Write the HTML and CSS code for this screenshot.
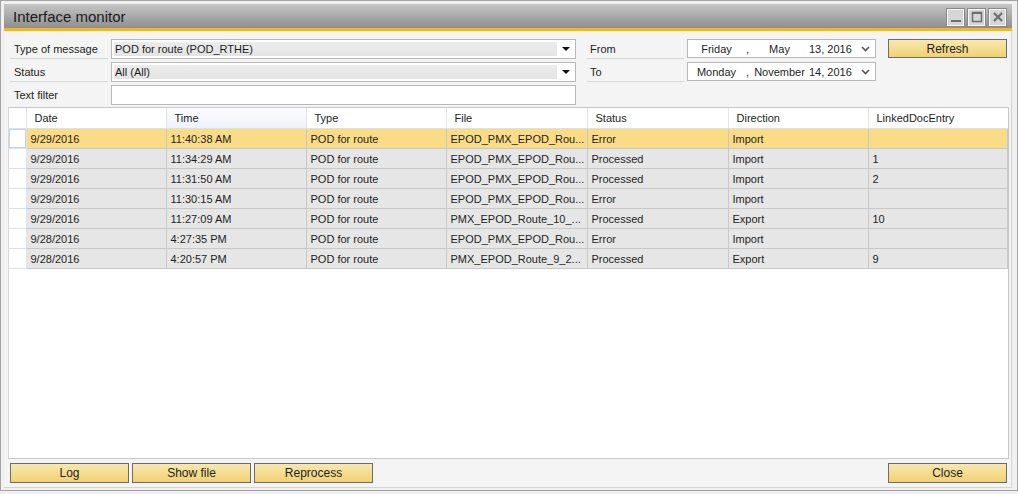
FILE: index.html
```html
<!DOCTYPE html>
<html lang="en">
<head>
  <meta charset="UTF-8">
  <title>Interface monitor</title>
  <link rel="stylesheet" href="styles.css">
</head>
<body>

  <div class="window">
    <!-- Title bar -->
    <div class="title-bar">
      <span class="title">Interface monitor</span>
      <div class="win-btns">
        <span class="win-btn"><svg width="14" height="14" viewBox="0 0 14 14"><rect x="2" y="10" width="10" height="2" fill="#6e6e6e"/></svg></span>
        <span class="win-btn"><svg width="14" height="14" viewBox="0 0 14 14"><rect x="2.5" y="2.5" width="9" height="9" fill="none" stroke="#6e6e6e" stroke-width="1.5"/><rect x="2" y="2" width="10" height="2" fill="#6e6e6e"/></svg></span>
        <span class="win-btn"><svg width="14" height="14" viewBox="0 0 14 14"><path d="M3 3 L11 11 M11 3 L3 11" stroke="#6e6e6e" stroke-width="2.2"/></svg></span>
      </div>
    </div>

    <div class="content">
      <!-- Filters -->
      <div class="filters">
        <div class="filter-left">
          <div class="row">
            <label class="lbl">Type of message</label>
            <div class="select"><div class="select-val">POD for route (POD_RTHE)</div><span class="arrow"></span></div>
          </div>
          <div class="row">
            <label class="lbl">Status</label>
            <div class="select"><div class="select-val">All (All)</div><span class="arrow"></span></div>
          </div>
          <div class="row">
            <label class="lbl no-line">Text filter</label>
            <div class="textbox"></div>
          </div>
        </div>

        <div class="filter-right">
          <div class="row">
            <label class="lbl">From</label>
            <div class="date">
              <span class="wd">Friday</span><span class="cm">,</span><span class="mo">May</span><span class="dy">13, 2016</span>
              <svg class="chev" width="9" height="6" viewBox="0 0 9 6"><path d="M1 1 L4.5 4.5 L8 1" fill="none" stroke="#555" stroke-width="1.6"/></svg>
            </div>
            <button class="btn refresh">Refresh</button>
          </div>
          <div class="row">
            <label class="lbl">To</label>
            <div class="date">
              <span class="wd">Monday</span><span class="cm">,</span><span class="mo">November</span><span class="dy">14, 2016</span>
              <svg class="chev" width="9" height="6" viewBox="0 0 9 6"><path d="M1 1 L4.5 4.5 L8 1" fill="none" stroke="#555" stroke-width="1.6"/></svg>
            </div>
          </div>
        </div>
      </div>

      <!-- Grid -->
      <div class="grid">
        <table>
          <colgroup>
            <col style="width:17px"><col style="width:140px"><col style="width:140px"><col style="width:140px">
            <col style="width:141px"><col style="width:141px"><col style="width:140px"><col>
          </colgroup>
          <thead>
            <tr>
              <th class="rh"></th><th>Date</th><th class="sorted">Time</th><th>Type</th><th>File</th><th>Status</th><th>Direction</th><th>LinkedDocEntry</th>
            </tr>
          </thead>
          <tbody>
            <tr class="selected">
              <td class="rh cur"></td><td>9/29/2016</td><td>11:40:38 AM</td><td>POD for route</td><td>EPOD_PMX_EPOD_Rou...</td><td>Error</td><td>Import</td><td></td>
            </tr>
            <tr>
              <td class="rh"></td><td>9/29/2016</td><td>11:34:29 AM</td><td>POD for route</td><td>EPOD_PMX_EPOD_Rou...</td><td>Processed</td><td>Import</td><td>1</td>
            </tr>
            <tr>
              <td class="rh"></td><td>9/29/2016</td><td>11:31:50 AM</td><td>POD for route</td><td>EPOD_PMX_EPOD_Rou...</td><td>Processed</td><td>Import</td><td>2</td>
            </tr>
            <tr>
              <td class="rh"></td><td>9/29/2016</td><td>11:30:15 AM</td><td>POD for route</td><td>EPOD_PMX_EPOD_Rou...</td><td>Error</td><td>Import</td><td></td>
            </tr>
            <tr>
              <td class="rh"></td><td>9/29/2016</td><td>11:27:09 AM</td><td>POD for route</td><td>PMX_EPOD_Route_10_...</td><td>Processed</td><td>Export</td><td>10</td>
            </tr>
            <tr>
              <td class="rh"></td><td>9/28/2016</td><td>4:27:35 PM</td><td>POD for route</td><td>EPOD_PMX_EPOD_Rou...</td><td>Error</td><td>Import</td><td></td>
            </tr>
            <tr>
              <td class="rh"></td><td>9/28/2016</td><td>4:20:57 PM</td><td>POD for route</td><td>PMX_EPOD_Route_9_2...</td><td>Processed</td><td>Export</td><td>9</td>
            </tr>
          </tbody>
        </table>
      </div>

      <!-- Bottom buttons -->
      <div class="actions">
        <button class="btn">Log</button>
        <button class="btn">Show file</button>
        <button class="btn">Reprocess</button>
        <button class="btn close">Close</button>
      </div>
    </div>
  </div>

</body>
</html>
```

FILE: styles.css
```css
/* Basic layout */
body {
  margin: 0;
  background-color: #f0f0f0;
  font-family: 'Liberation Sans', Arial, sans-serif;
  font-size: 11px;
  color: #1e1e1e;
}

.window {
  width: 1018px;
  height: 491px;
  box-sizing: border-box;
  border: 1px solid #a4a4a4;
  padding: 3px 5px 2px 3px;
  background-color: #f0f0f0;
  display: flex;
  flex-direction: column;
}

/* Title bar */
.title-bar {
  height: 24px;
  flex-shrink: 0;
  display: flex;
  align-items: center;
  justify-content: space-between;
  padding: 0 6px 0 9px;
  background: linear-gradient(#c6c6c6, #8e8e8e);
  border-bottom: 3px solid #f5b915;
}

.title {
  font-size: 15px;
  color: #1a1a1a;
}

.win-btns {
  display: flex;
  gap: 4px;
  margin-top: 2px;
}

.win-btn {
  width: 15px;
  height: 15px;
  display: flex;
  align-items: center;
  justify-content: center;
  background-color: #d6d6d6;
  border: 1px solid #f6f6f6;
  box-shadow: 0 0 0 1px #8a8a8a;
}

/* Content */
.content {
  flex: 1;
  display: flex;
  flex-direction: column;
  background-color: #f4f4f4;
  padding: 8px 2px 4px 4px;
  border-right: 1px solid #d4d4d4;
  border-bottom: 1px solid #d4d4d4;
}

.filters {
  display: flex;
  gap: 11px;
  margin-left: 2px;
}

.filter-left,
.filter-right {
  display: flex;
  flex-direction: column;
  gap: 3px;
}

.row {
  display: flex;
  gap: 3px;
  height: 20px;
}

.lbl {
  width: 98px;
  padding-left: 4px;
  line-height: 20px;
  border-bottom: 1px solid #d8d8d8;
  box-sizing: border-box;
  color: #222;
}

.lbl.no-line {
  border-bottom: none;
}

.select {
  width: 465px;
  box-sizing: border-box;
  border: 1px solid #b8b8b8;
  background-color: #fff;
  padding: 2px 1px 2px 2px;
  display: flex;
}

.select-val {
  flex: 1;
  background: linear-gradient(#ececec, #e4e4e4);
  padding-left: 1px;
  line-height: 14px;
  white-space: nowrap;
}

.arrow {
  width: 17px;
  position: relative;
}

.arrow::after {
  content: '';
  position: absolute;
  left: 5px;
  top: 5px;
  border-left: 4px solid transparent;
  border-right: 4px solid transparent;
  border-top: 4px solid #111;
}

.textbox {
  width: 465px;
  box-sizing: border-box;
  border: 1px solid #b8b8b8;
  background-color: #fff;
}

.filter-right .lbl {
  width: 97px;
  padding-left: 3px;
}

.date {
  width: 189px;
  height: 19px;
  box-sizing: border-box;
  border: 1px solid #b8b8b8;
  background-color: #fff;
  display: flex;
  align-items: center;
  white-space: nowrap;
  position: relative;
}

.date .wd {
  width: 57px;
  text-align: center;
}

.date .cm {
  width: 8px;
  padding-left: 1px;
}

.date .mo {
  width: 51px;
  text-align: center;
}

.date .dy {
  padding-left: 4px;
}

.chev {
  position: absolute;
  right: 5px;
  top: 6px;
}

/* Buttons */
.btn {
  width: 119px;
  height: 20px;
  box-sizing: border-box;
  border: 1px solid #6c6c6c;
  background: linear-gradient(#f8e8b0, #f0d272);
  font-family: 'Liberation Sans', Arial, sans-serif;
  font-size: 12px;
  color: #1e1e1e;
  padding: 0;
  cursor: pointer;
}

.refresh {
  height: 19px;
  margin-left: 9px;
}

/* Grid */
.grid {
  flex: 1;
  margin-top: 2px;
  background-color: #fff;
  border: 1px solid #c8c8c8;
  border-left-color: #d8d8d8;
  overflow: hidden;
}

table {
  width: 100%;
  border-collapse: collapse;
  table-layout: fixed;
}

th {
  height: 20px;
  text-align: left;
  font-weight: normal;
  padding: 0 0 0 8px;
  border-left: 1px solid #e4e4e4;
  border-bottom: 1px solid #d8e2ee;
  background-color: #fff;
}

th.sorted {
  background: linear-gradient(#fbfcfe, #eef3fa);
}

td {
  height: 19px;
  padding: 0 0 0 4px;
  border: 1px solid #c8c8c8;
  background-color: #e6e6e6;
  white-space: nowrap;
  overflow: hidden;
}

tr.selected td {
  background-color: #fadc86;
}

td.rh,
tr.selected td.rh {
  background-color: #fff;
  border-left: none;
  border-color: #dde3eb;
}

td.rh.cur {
  box-shadow: inset 0 0 0 1px #c8d2de;
}

th.rh {
  border-left: none;
}

/* Bottom action bar */
.actions {
  display: flex;
  gap: 3px;
  margin-top: 4px;
  margin-left: 2px;
}

.actions .close {
  margin-left: auto;
  margin-right: 2px;
}
```
